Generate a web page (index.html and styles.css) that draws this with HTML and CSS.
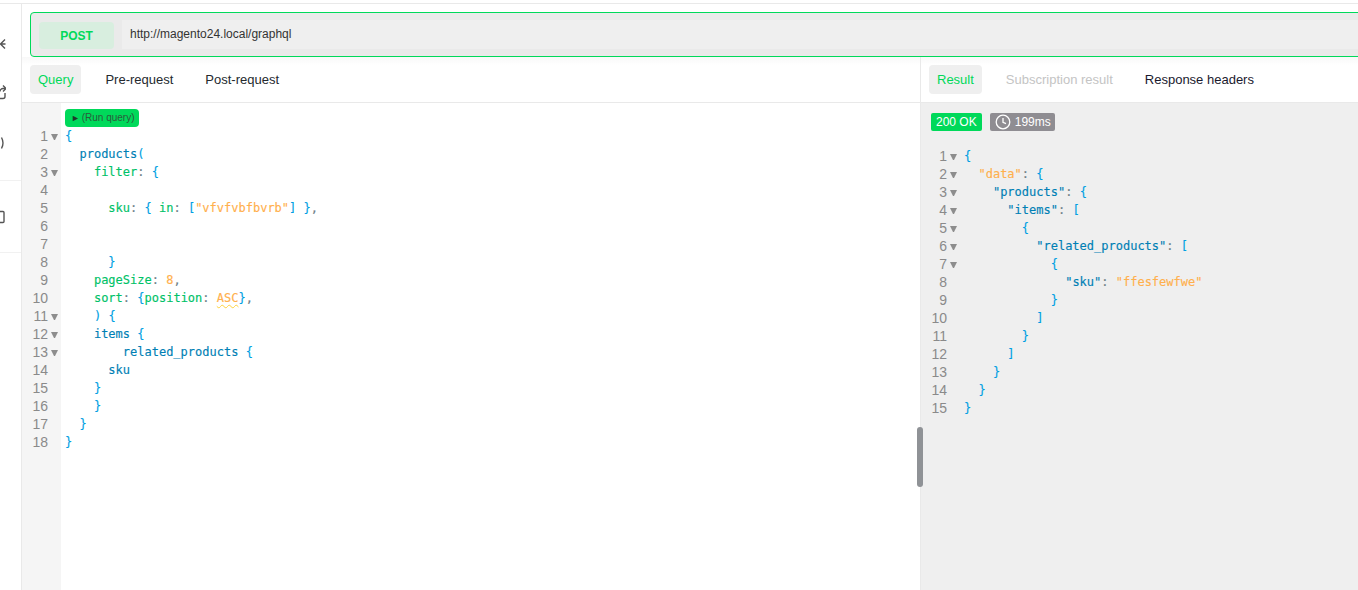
FILE: index.html
```html
<!DOCTYPE html>
<html lang="en">
<head>
<meta charset="utf-8">
<title>GraphQL client</title>
<link rel="stylesheet" href="styles.css">
</head>
<body>
<div class="app">
  <aside class="rail">
    <div class="rail-group">
      <svg class="rail-icon" width="14" height="14" viewBox="0 0 14 14"><path d="M8.500 7h5M13 2.500L8.500 7l4.500 4.500"/></svg>
      <svg class="rail-icon" width="14" height="16" viewBox="0 0 14 16"><path d="M11 1.500l3 3-3 3M13.500 4.500H11a3 3 0 0 0-3 3M13 9v3.500a2 2 0 0 1-2 2H8"/></svg>
      <svg class="rail-icon" width="14" height="20" viewBox="0 0 14 20"><path d="M9.500 4.500q3 5.500 0 11"/></svg>
    </div>
    <div class="rail-group rail-group-last">
      <svg class="rail-icon" width="14" height="14" viewBox="0 0 14 14"><path d="M8 1.500h3a1 1 0 0 1 1 1v9a1 1 0 0 1-1 1H8"/></svg>
    </div>
  </aside>
  <main class="workspace">
    <div class="url-wrap">
      <div class="url-bar">
        <div class="method">POST</div>
        <div class="url">http://magento24.local/graphql</div>
      </div>
    </div>
    <div class="panes">
      <section class="pane pane-query">
        <nav class="tabs">
          <span class="tab active">Query</span>
          <span class="tab">Pre-request</span>
          <span class="tab">Post-request</span>
        </nav>
        <div class="editor">
          <div class="gutter-bg"></div>
          <div class="run-row"><span class="run"><span class="run-arrow">►</span> (Run query)</span></div>
          <div class="code">
            <div class="ln"><span class="no">1</span><i class="fold"></i><span class="src"><b class="br">{</b></span></div>
            <div class="ln"><span class="no">2</span><i class="nofold"></i><span class="src">  <b class="key">products</b><b class="br">(</b></span></div>
            <div class="ln"><span class="no">3</span><i class="fold"></i><span class="src">    <b class="arg">filter</b><b class="pn">:</b> <b class="br">{</b></span></div>
            <div class="ln"><span class="no">4</span><i class="nofold"></i><span class="src"></span></div>
            <div class="ln"><span class="no">5</span><i class="nofold"></i><span class="src">      <b class="arg">sku</b><b class="pn">:</b> <b class="br">{</b> <b class="arg">in</b><b class="pn">:</b> <b class="br">[</b><b class="str">"vfvfvbfbvrb"</b><b class="br">]</b> <b class="br">}</b><b class="pn">,</b></span></div>
            <div class="ln"><span class="no">6</span><i class="nofold"></i><span class="src"></span></div>
            <div class="ln"><span class="no">7</span><i class="nofold"></i><span class="src"></span></div>
            <div class="ln"><span class="no">8</span><i class="nofold"></i><span class="src">      <b class="br">}</b></span></div>
            <div class="ln"><span class="no">9</span><i class="nofold"></i><span class="src">    <b class="arg">pageSize</b><b class="pn">:</b> <b class="str">8</b><b class="pn">,</b></span></div>
            <div class="ln"><span class="no">10</span><i class="nofold"></i><span class="src">    <b class="arg">sort</b><b class="pn">:</b> <b class="br">{</b><b class="arg">position</b><b class="pn">:</b> <b class="str warn">ASC</b><b class="br">}</b><b class="pn">,</b></span></div>
            <div class="ln"><span class="no">11</span><i class="fold"></i><span class="src">    <b class="br">)</b> <b class="br">{</b></span></div>
            <div class="ln"><span class="no">12</span><i class="fold"></i><span class="src">    <b class="key">items</b> <b class="br">{</b></span></div>
            <div class="ln"><span class="no">13</span><i class="fold"></i><span class="src">        <b class="key">related_products</b> <b class="br">{</b></span></div>
            <div class="ln"><span class="no">14</span><i class="nofold"></i><span class="src">      <b class="key">sku</b></span></div>
            <div class="ln"><span class="no">15</span><i class="nofold"></i><span class="src">    <b class="br">}</b></span></div>
            <div class="ln"><span class="no">16</span><i class="nofold"></i><span class="src">    <b class="br">}</b></span></div>
            <div class="ln"><span class="no">17</span><i class="nofold"></i><span class="src">  <b class="br">}</b></span></div>
            <div class="ln"><span class="no">18</span><i class="nofold"></i><span class="src"><b class="br">}</b></span></div>
          </div>
        </div>
      </section>
      <div class="divider"><span class="handle"></span></div>
      <section class="pane pane-result">
        <nav class="tabs">
          <span class="tab active">Result</span>
          <span class="tab disabled">Subscription result</span>
          <span class="tab dark">Response headers</span>
        </nav>
        <div class="result">
          <div class="status-row">
            <span class="badge ok">200 OK</span>
            <span class="badge time"><svg width="16" height="16" viewBox="0 0 16 16"><circle cx="8" cy="8" r="6.800"/><path d="M8 4v4.400l3 1.200"/></svg>199ms</span>
          </div>
          <div class="code code-result">
            <div class="ln"><span class="no">1</span><i class="fold"></i><span class="src"><b class="br">{</b></span></div>
            <div class="ln"><span class="no">2</span><i class="fold"></i><span class="src">  <b class="str">"data"</b><b class="pn">:</b> <b class="br">{</b></span></div>
            <div class="ln"><span class="no">3</span><i class="fold"></i><span class="src">    <b class="key">"products"</b><b class="pn">:</b> <b class="br">{</b></span></div>
            <div class="ln"><span class="no">4</span><i class="fold"></i><span class="src">      <b class="key">"items"</b><b class="pn">:</b> <b class="br">[</b></span></div>
            <div class="ln"><span class="no">5</span><i class="fold"></i><span class="src">        <b class="br">{</b></span></div>
            <div class="ln"><span class="no">6</span><i class="fold"></i><span class="src">          <b class="key">"related_products"</b><b class="pn">:</b> <b class="br">[</b></span></div>
            <div class="ln"><span class="no">7</span><i class="fold"></i><span class="src">            <b class="br">{</b></span></div>
            <div class="ln"><span class="no">8</span><i class="nofold"></i><span class="src">              <b class="key">"sku"</b><b class="pn">:</b> <b class="str">"ffesfewfwe"</b></span></div>
            <div class="ln"><span class="no">9</span><i class="nofold"></i><span class="src">            <b class="br">}</b></span></div>
            <div class="ln"><span class="no">10</span><i class="nofold"></i><span class="src">          <b class="br">]</b></span></div>
            <div class="ln"><span class="no">11</span><i class="nofold"></i><span class="src">        <b class="br">}</b></span></div>
            <div class="ln"><span class="no">12</span><i class="nofold"></i><span class="src">      <b class="br">]</b></span></div>
            <div class="ln"><span class="no">13</span><i class="nofold"></i><span class="src">    <b class="br">}</b></span></div>
            <div class="ln"><span class="no">14</span><i class="nofold"></i><span class="src">  <b class="br">}</b></span></div>
            <div class="ln"><span class="no">15</span><i class="nofold"></i><span class="src"><b class="br">}</b></span></div>
          </div>
        </div>
      </section>
    </div>
  </main>
</div>
</body>
</html>
```
FILE: styles.css
```css
* { box-sizing: border-box; }
html, body { margin: 0; height: 100%; overflow: hidden; background: #fff; }
body { font-family: "Liberation Sans", Arial, sans-serif; font-size: 13px; color: #24292e; }
.app { display: flex; height: 590px; padding-top: 4px; background: linear-gradient(#fff 3px, #e9e9e9 3px, #e9e9e9 4px, #fff 4px); }
.rail { width: 22px; flex: none; border-right: 1px solid #e9e9e9; overflow: hidden; }
.rail-group { display: flex; flex-direction: column; gap: 33px; align-items: flex-start; padding: 33px 0 0; border-bottom: 1px solid #f1f1f1; height: 177px; }
.rail-group-last { height: 72px; padding-top: 29px; }
.rail-icon { margin-left: -8px; fill: none; stroke: #555; stroke-width: 1.4; flex: none; }
.workspace { flex: 1; min-width: 0; display: flex; flex-direction: column; overflow: hidden; }
.url-wrap { padding: 8px 0 0 8px; flex: none; }
.url-bar { display: flex; align-items: center; height: 45px; width: 1340px; border: 1px solid #00d95a; border-radius: 4px; background: #eaeaea; padding: 0 0 0 8px; }
.method { width: 75px; height: 27px; margin-top: 1px; padding-top: 2px; background: #d8eedf; border-radius: 4px; color: #00d95a; font-weight: 700; font-size: 12px; display: flex; align-items: center; justify-content: center; }
.url { flex: 1; height: 29px; margin-left: 8px; padding-left: 8px; background: #efefef; line-height: 29px; font-size: 12px; color: #333; }
.panes { flex: 1; display: flex; min-height: 0; }
.pane { display: flex; flex-direction: column; min-width: 0; }
.pane-query { width: 898px; flex: none; }
.pane-result { flex: 1; }
.divider { width: 1px; flex: none; background: #e9e9e9; position: relative; }
.handle { position: absolute; left: -3px; top: 370px; width: 6px; height: 60px; border-radius: 3px; background: #8f9296; }
.tabs { height: 46px; flex: none; display: flex; align-items: center; gap: 8px; padding: 0 8px; border-bottom: 1px solid #e9e9e9; background: linear-gradient(#f8f8f8, #fff 8px); }
.tab { height: 29px; line-height: 29px; padding: 0 8px; margin-right: 8px; border-radius: 4px; color: #24292e; white-space: nowrap; }
.tab.active { background: #efefef; color: #00d95a; }
.tab.disabled { color: #c4c4c4; }
.tab.dark { color: #1a1a2e; }
.editor { flex: 1; position: relative; padding-top: 6px; }
.gutter-bg { position: absolute; left: 0; top: 0; bottom: 0; width: 39px; background: #f5f5f5; }
.run-row { position: relative; height: 18px; padding-left: 43px; }
.run { display: inline-block; height: 18px; width: 74px; background: #00d95a; border-radius: 4px; font-size: 10px; line-height: 17px; color: #2c5a3c; padding-left: 6px; white-space: nowrap; }
.run-arrow { font-size: 9px; color: #1f3a2a; margin-right: -1px; }
.code { position: relative; font-family: "DejaVu Sans Mono", monospace; font-size: 12px; line-height: 18px; -webkit-text-stroke: 0.15px currentColor; }
.ln { display: flex; height: 18px; white-space: pre; }
.no { width: 26px; flex: none; text-align: right; font-family: "Liberation Sans", sans-serif; font-size: 14px; color: #8a8a8a; -webkit-text-stroke: 0; }
.fold, .nofold { width: 7px; flex: none; margin: 0 7px 0 3px; }
.fold { height: 0; margin-top: 7px; border-left: 3.5px solid transparent; border-right: 3.5px solid transparent; border-top: 6px solid #8d8d8d; }
.src { white-space: pre; }
.src b { font-weight: 400; }
.br { color: #009fe3; }
.pn { color: #6f8088; }
.key { color: #007fb5; }
.arg { color: #00c268; }
.str { color: #ffb04d; }
.warn { text-decoration: underline wavy #ffd23c 1px; text-underline-offset: 2px; }
.result { flex: 1; background: #efefef; padding: 10px 0 0 10px; }
.status-row { display: flex; gap: 8px; height: 18px; margin-bottom: 16px; }
.badge { display: inline-flex; align-items: center; height: 18px; padding: 0 5px; border-radius: 2px; color: #fff; font-size: 12px; }
.ok { background: #00d95a; }
.time { background: #8f8d92; gap: 4px; padding-left: 5px; padding-right: 4px; }
.time svg { fill: none; stroke: #fff; stroke-width: 1.3; }
.code-result { margin-left: -10px; }
```
